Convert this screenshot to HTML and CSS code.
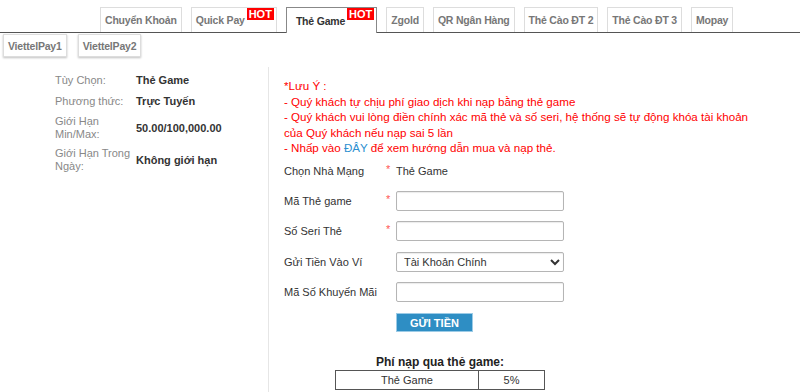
FILE: index.html
```html
<!DOCTYPE html>
<html lang="vi">
<head>
  <meta charset="UTF-8">
  <meta name="viewport" content="width=device-width, initial-scale=1.0">
  <title>Nạp Tiền | Thẻ Game</title>
  <link rel="stylesheet" href="styles.css">
</head>
<body>
  <div class="tabs">
    <div class="tab-row main-row">
      <a class="tab">Chuyển Khoản</a>
      <a class="tab">Quick Pay<span class="badge">HOT</span></a>
      <a class="tab active">Thẻ Game<span class="badge">HOT</span></a>
      <a class="tab">Zgold</a>
      <a class="tab">QR Ngân Hàng</a>
      <a class="tab">Thẻ Cào ĐT 2</a>
      <a class="tab">Thẻ Cào ĐT 3</a>
      <a class="tab">Mopay</a>
    </div>
    <div class="tab-row sub-row">
      <a class="tab">ViettelPay1</a>
      <a class="tab">ViettelPay2</a>
    </div>
  </div>

  <div class="content">
    <div class="info">
      <table class="info-table">
        <tr>
          <td class="info-label">Tùy Chọn:</td>
          <td class="info-value">Thẻ Game</td>
        </tr>
        <tr>
          <td class="info-label">Phương thức:</td>
          <td class="info-value">Trực Tuyến</td>
        </tr>
        <tr>
          <td class="info-label">Giới Hạn Min/Max:</td>
          <td class="info-value">50.00/100,000.00</td>
        </tr>
        <tr>
          <td class="info-label">Giới Hạn Trong Ngày:</td>
          <td class="info-value">Không giới hạn</td>
        </tr>
      </table>
    </div>

    <div class="deposit">
      <div class="notice">
        *Lưu Ý :<br>
        - Quý khách tự chịu phí giao dịch khi nạp bằng thẻ game<br>
        - Quý khách vui lòng điền chính xác mã thẻ và số seri, hệ thống sẽ tự động khóa tài khoản của Quý khách nếu nạp sai 5 lần<br>
        - Nhấp vào <a class="link">ĐÂY</a> để xem hướng dẫn mua và nạp thẻ.
      </div>

      <form class="form">
        <div class="form-row">
          <label class="form-label">Chọn Nhà Mạng</label>
          <span class="req">*</span>
          <span class="form-text">Thẻ Game</span>
        </div>
        <div class="form-row">
          <label class="form-label">Mã Thẻ game</label>
          <span class="req">*</span>
          <input class="field" type="text">
        </div>
        <div class="form-row">
          <label class="form-label">Số Seri Thẻ</label>
          <span class="req">*</span>
          <input class="field" type="text">
        </div>
        <div class="form-row">
          <label class="form-label">Gửi Tiền Vào Ví</label>
          <span class="req"></span>
          <select class="field select">
            <option>Tài Khoản Chính</option>
          </select>
        </div>
        <div class="form-row">
          <label class="form-label">Mã Số Khuyến Mãi</label>
          <span class="req"></span>
          <input class="field" type="text">
        </div>
        <div class="form-row">
          <span class="form-label"></span>
          <span class="req"></span>
          <button type="button" class="submit">GỬI TIỀN</button>
        </div>
      </form>

      <div class="fee">
        <div class="fee-title">Phí nạp qua thẻ game:</div>
        <table class="fee-table">
          <tr>
            <td class="fee-name">Thẻ Game</td>
            <td class="fee-rate">5%</td>
          </tr>
        </table>
      </div>
    </div>
  </div>
</body>
</html>
```

FILE: styles.css
```css
* {
  box-sizing: border-box;
}

body {
  margin: 0;
  font-family: "Liberation Sans", Arial, sans-serif;
  font-size: 12px;
  color: #333;
  background-color: #fff;
}

/* tabs */

.tab-row {
  display: flex;
  align-items: flex-end;
  gap: 9px;
}

.main-row {
  padding: 7px 0 0 100px;
  border-bottom: 1px solid #555;
}

.sub-row {
  padding-left: 3px;
  gap: 11px;
}

.tab {
  display: flex;
  align-items: center;
  height: 25px;
  padding: 0 4px;
  border: 1px solid #ddd;
  border-bottom: none;
  background-color: #fff;
  color: #777;
  font-size: 10.5px;
  font-weight: bold;
  letter-spacing: -0.2px;
  white-space: nowrap;
  cursor: pointer;
}

.sub-row .tab {
  height: 23px;
  margin-top: 1px;
  border-bottom: 1px solid #ddd;
  box-shadow: 0 1px 2px rgba(0, 0, 0, 0.25);
}

.tab.active {
  border-color: #888;
  color: #333;
  height: 26px;
  margin-bottom: -1px;
  padding-left: 9px;
  background-color: #fff;
}

.badge {
  align-self: flex-start;
  margin: 0 -2px 0 2px;
  padding: 0 2px;
  height: 12px;
  line-height: 12px;
  background-color: #f00;
  color: #fff;
  font-size: 11px;
  font-weight: bold;
  letter-spacing: 0;
}

/* content */

.content {
  display: flex;
  margin-top: 10px;
  min-height: 330px;
}

.info {
  width: 269px;
  flex-shrink: 0;
  padding: 3px 0 0 52px;
  border-right: 1px solid #e6e6e6;
}

.info-table {
  border-collapse: collapse;
}

.info-table td {
  padding: 3px;
  font-size: 11px;
  line-height: 13px;
  vertical-align: middle;
}

.info-label {
  width: 83px;
  padding-right: 1px !important;
  color: #888;
}

.info-value {
  padding-left: 1px !important;
  color: #333;
  font-weight: bold;
}

.info-table tr:nth-child(-n+2) td {
  height: 21px;
}

.info-table tr:nth-child(n+3) td {
  height: 32px;
}

.deposit {
  flex: 1;
  padding-left: 15px;
}

.notice {
  max-width: 472px;
  margin-top: 11px;
  color: #f00;
  font-size: 11.6px;
  line-height: 15.5px;
}

.link {
  color: #2a8fd0;
  cursor: pointer;
}

/* form */

.form {
  margin-top: 0;
  width: 312px;
}

.form-row {
  display: flex;
  align-items: center;
  height: 30.4px;
}

.form-label {
  width: 102px;
  font-size: 11px;
  color: #333;
}

.req {
  width: 10px;
  align-self: flex-start;
  margin-top: 7px;
  color: #f55;
  font-size: 11px;
}

.form-text {
  font-size: 11px;
  color: #333;
}

.field {
  width: 168px;
  height: 20px;
  padding: 0 4px;
  border: 1px solid #b5b5b5;
  border-radius: 2px;
  box-shadow: inset 0 1px 1px rgba(0, 0, 0, 0.08);
  font-family: inherit;
  font-size: 11px;
  color: #333;
  background-color: #fff;
}

.select {
  padding-left: 3px;
}

.submit {
  width: 77px;
  height: 19px;
  padding: 0;
  border: 1px solid #9ccbe6;
  background-color: #2e8ec4;
  color: #fff;
  font-family: inherit;
  font-size: 11px;
  font-weight: bold;
  cursor: pointer;
}

/* fee */

.fee {
  width: 312px;
  margin-top: 17px;
  text-align: center;
}

.fee-title {
  font-size: 12px;
  font-weight: bold;
  color: #222;
  line-height: 15px;
}

.fee-table {
  width: 210px;
  margin: 0 auto;
  border-collapse: collapse;
}

.fee-table td {
  height: 19px;
  padding: 0;
  border: 1px solid #555;
  font-size: 11px;
  color: #333;
}

.fee-name {
  width: 143px;
}
```
